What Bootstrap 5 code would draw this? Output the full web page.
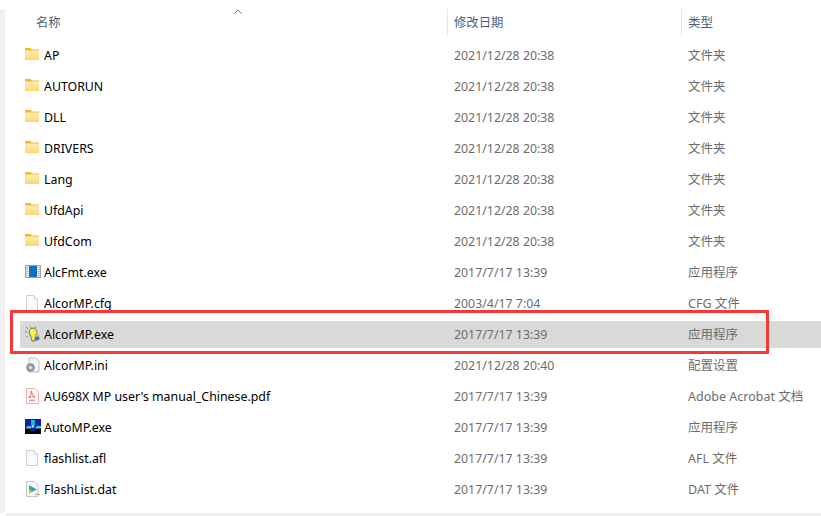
<!DOCTYPE html>
<html lang="zh-CN">

<head>
  <meta charset="UTF-8" />
  <meta name="viewport" content="width=device-width, initial-scale=1">
  <title>AlcorMP</title>

  <link href="https://cdn.jsdelivr.net/npm/bootstrap@5.3.3/dist/css/bootstrap.min.css" rel="stylesheet" />
  <style>
    html, body { height: 516px; overflow: hidden; background: #fff; }
    body { font-family: "Noto Sans", "Noto Sans CJK SC", sans-serif; font-size: 12.35px; }
    .explorer { height: 516px; padding: 9px 0 3px 0; position: relative; }
    .side-strip { width: 5px; background: #f0f0f0; }
    .bottom-strip { position: absolute; left: 6px; right: 0; bottom: 0; height: 3px; background: #f0f0f0; }
    .file-pane { padding-left: 15px; }
    .head-row { height: 27px; margin-bottom: 4px; position: relative; color: #4c607a; }
    .head-row > div { padding-top: 2px; }
    .file-row { height: 31px; padding: 2px 0; }
    .file-row > div { height: 27px; }
    .file-row.picked > div { background: #d9d9d9; }
    .col-name { width: 428px; flex: none; padding-left: 5px; gap: 3px; color: #000; }
    .head-row .col-name { padding-left: 16px; color: #4c607a; }
    .col-date { width: 233px; flex: none; padding-left: 6px; padding-top: 2px; color: #6d6d6d; }
    .col-kind { flex: 1; padding-left: 7px; padding-top: 2px; color: #6d6d6d; white-space: nowrap; font-size: 12.5px; }
    .col-name span { padding-top: 2px; }
    .head-row .col-date, .head-row .col-kind { border-left: 1px solid #e5e5e5; color: #4c607a; }
    .head-row .col-date { margin-left: -1px; width: 234px; }
    .head-row .col-kind { padding-left: 6px; }
    .sort-caret { position: absolute; left: 214px; top: 0; }
    .ficon { width: 16px; height: 16px; flex: none; }
    .red-box { position: absolute; left: 10px; top: 310px; width: 759px; height: 44px; border: 3px solid #f53838; }
  </style>
</head>

<body>
  <svg width="0" height="0" class="position-absolute">
    <defs>
      <linearGradient id="folderFill" x1="0" y1="0" x2="0" y2="1">
        <stop offset="0" stop-color="#ffeeb5" />
        <stop offset="1" stop-color="#fdd673" />
      </linearGradient>
      <symbol id="ic-folder" viewBox="0 0 16 16">
        <path d="M0 1h5.500l1.500 1.500h7V5H0z" fill="#f6b62c" />
        <rect x="0" y="3.500" width="14" height="9.500" fill="url(#folderFill)" />
      </symbol>
      <symbol id="ic-doc" viewBox="0 0 16 16">
        <path d="M1.500 .5h7.500l3.500 3.500v11.500H1.500z" fill="#fafafa" stroke="#cfcfcf" />
        <path d="M9 .5v3.500h3.500" fill="#fff" stroke="#cfcfcf" />
      </symbol>
    </defs>
  </svg>

  <div class="explorer d-flex">
    <div class="side-strip"></div>
    <div class="file-pane flex-grow-1" id="pane">
      <div class="head-row d-flex align-items-center">
        <svg class="sort-caret" width="8" height="5" viewBox="0 0 8 5"><path d="M.5 4.500l3.500-3.500 3.500 3.500" fill="none" stroke="#7a7a7a" /></svg>
        <div class="col-name">名称</div>
        <div class="col-date h-100 d-flex align-items-center">修改日期</div>
        <div class="col-kind h-100 d-flex align-items-center">类型</div>
      </div>
    </div>
    <div class="bottom-strip"></div>
    <div class="red-box"></div>
  </div>

  <script src="https://cdn.jsdelivr.net/npm/bootstrap@5.3.3/dist/js/bootstrap.bundle.min.js"></script>
  <script>
    const icons = {
      folder: '<svg class="ficon"><use href="#ic-folder"/></svg>',
      doc: '<svg class="ficon"><use href="#ic-doc"/></svg>',
      fmt: '<svg class="ficon" viewBox="0 0 16 16"><rect x=".5" y="1.500" width="15" height="12" fill="#e9e9e9" stroke="#a0a0a0"/><rect x="4" y="2" width="8" height="11" fill="#0a70c8"/><path d="M2 3v9M14 3v9" stroke="#8c8c8c" stroke-dasharray="1 1"/></svg>',
      bulb: '<svg class="ficon" viewBox="0 0 16 16"><path d="M1 1l2 2M0 6h2M1 11l2-1M11 0l-1 2M5 0l1 2" stroke="#777" stroke-width=".8"/><path d="M8 2a4 4 0 0 0-3 6.500l1 2.500 1 4h3l1-6.500a4 4 0 0 0-3-6.500z" fill="#f7ef4a" stroke="#555" stroke-width=".8"/><path d="M6 5l1-1" stroke="#fff"/><path d="M9 9l3-2 3 3-3 2z" fill="#f2b233"/><path d="M9 12l4-2 2 3-4 2z" fill="#2f7fd0"/></svg>',
      ini: '<svg class="ficon" viewBox="0 0 16 16"><path d="M4 1h7l3 3v11H4z" fill="#f7f7f7" stroke="#bdbdbd"/><circle cx="5.500" cy="10.500" r="4" fill="#95a2ad" stroke="#75808a" stroke-width=".6"/><circle cx="5.500" cy="10.500" r="1.500" fill="#e6eaed"/></svg>',
      pdf: '<svg class="ficon" viewBox="0 0 16 16"><path d="M1.500 .5h8.500l3.500 3.500v11.500H1.500z" fill="#fff" stroke="#f2a9a9"/><path d="M3.500 9.500c2-1 3-3.500 2.800-6.500.7 3 1.800 4.800 3.700 6-2.300-.4-4.500-.1-6.500.5z" fill="none" stroke="#ee4a45" stroke-width=".9"/><rect x="4" y="11.500" width="6" height="2" fill="#d8aaaa"/></svg>',
      auto: '<svg class="ficon" viewBox="0 0 16 16"><rect y="0" width="16" height="15" fill="#0a1fb0"/><path d="M6 1h4v5.500H6z" fill="#1fb8d8"/><path d="M7 6.500h2v2H7z" fill="#e8f4ff"/><path d="M0 8h6v7H0zM10 8h6v7h-6z" fill="#050505"/><path d="M0 9.500l2.500-2.500h4v2.500zM9.500 9.500l2.500-2.500h4v2.500z" fill="#3fd0e0"/><path d="M5 12h6v3H5z" fill="#000"/></svg>',
      dat: '<svg class="ficon" viewBox="0 0 16 16"><path d="M1.500 .5h8l3.500 3.500v11.500H1.500z" fill="#f9f9f9" stroke="#c6c6c6"/><path d="M4 4.500l8 4-8 4z" fill="#35b85a"/><path d="M4 4.500l6 3-3 2.500z" fill="#2a9fe0"/><path d="M4 12.500l3-2.500-3-2z" fill="#f5b52e"/><path d="M10 13.500h5" stroke="#b5b5b5" stroke-width="1.500"/></svg>'
    };

    const arquivos = [
      ['folder', 'AP', '2021/12/28 20:38', '文件夹'],
      ['folder', 'AUTORUN', '2021/12/28 20:38', '文件夹'],
      ['folder', 'DLL', '2021/12/28 20:38', '文件夹'],
      ['folder', 'DRIVERS', '2021/12/28 20:38', '文件夹'],
      ['folder', 'Lang', '2021/12/28 20:38', '文件夹'],
      ['folder', 'UfdApi', '2021/12/28 20:38', '文件夹'],
      ['folder', 'UfdCom', '2021/12/28 20:38', '文件夹'],
      ['fmt', 'AlcFmt.exe', '2017/7/17 13:39', '应用程序'],
      ['doc', 'AlcorMP.cfg', '2003/4/17 7:04', 'CFG 文件'],
      ['bulb', 'AlcorMP.exe', '2017/7/17 13:39', '应用程序', true],
      ['ini', 'AlcorMP.ini', '2021/12/28 20:40', '配置设置'],
      ['pdf', "AU698X MP user's manual_Chinese.pdf", '2017/7/17 13:39', 'Adobe Acrobat 文档'],
      ['auto', 'AutoMP.exe', '2017/7/17 13:39', '应用程序'],
      ['doc', 'flashlist.afl', '2017/7/17 13:39', 'AFL 文件'],
      ['dat', 'FlashList.dat', '2017/7/17 13:39', 'DAT 文件']
    ];

    document.getElementById('pane').insertAdjacentHTML('beforeend', arquivos.map(a => `
      <div class="file-row${a[4] ? ' picked' : ''}">
        <div class="d-flex align-items-center">
          <div class="col-name d-flex align-items-center">${icons[a[0]]}<span>${a[1]}</span></div>
          <div class="col-date">${a[2]}</div>
          <div class="col-kind">${a[3]}</div>
        </div>
      </div>`).join(''));
  </script>
</body>

</html>
